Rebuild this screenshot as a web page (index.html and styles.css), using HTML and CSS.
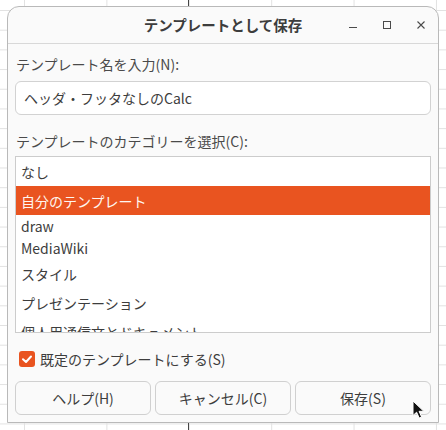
FILE: index.html
```html
<!DOCTYPE html>
<html lang="ja">
<head>
<meta charset="utf-8">
<title>テンプレートとして保存</title>
<link rel="stylesheet" href="styles.css">
</head>
<body>
<div class="dialog">
  <div class="titlebar">
    <div class="tb-spacer"></div>
    <div class="title">テンプレートとして保存</div>
    <div class="controls">
      <div class="ctl"><svg width="10" height="10" viewBox="0 0 10 10"><line x1="1" y1="7.5" x2="9" y2="7.5" stroke="#4a4a4a" stroke-width="1"/></svg></div>
      <div class="ctl"><svg width="10" height="10" viewBox="0 0 10 10"><rect x="1.5" y="1.5" width="7" height="7" fill="none" stroke="#4a4a4a" stroke-width="1"/></svg></div>
      <div class="ctl"><svg width="10" height="10" viewBox="0 0 10 10"><path d="M1.5 1.5 L8.5 8.5 M8.5 1.5 L1.5 8.5" stroke="#4a4a4a" stroke-width="1.1"/></svg></div>
    </div>
  </div>
  <div class="content">
    <div class="label">テンプレート名を入力(N):</div>
    <div class="entry">ヘッダ・フッタなしのCalc</div>
    <div class="label label2">テンプレートのカテゴリーを選択(C):</div>
    <div class="list">
      <div class="row">なし</div>
      <div class="row selected">自分のテンプレート</div>
      <div class="row short">draw</div>
      <div class="row short">MediaWiki</div>
      <div class="row">スタイル</div>
      <div class="row">プレゼンテーション</div>
      <div class="row">個人用通信文とドキュメント</div>
    </div>
    <div class="check-row">
      <div class="checkbox"><svg width="16" height="16" viewBox="0 0 16 16"><path d="M4 8.2 L7 11 L12 5.5" fill="none" stroke="#ffffff" stroke-width="2" stroke-linecap="round" stroke-linejoin="round"/></svg></div>
      <div class="check-label">既定のテンプレートにする(S)</div>
    </div>
    <div class="buttons">
      <div class="btn">ヘルプ(H)</div>
      <div class="btn">キャンセル(C)</div>
      <div class="btn">保存(S)</div>
    </div>
  </div>
</div>
<svg class="cursor" width="14" height="20" viewBox="0 0 14 20"><path d="M1 1 L1 15.5 L4.6 12.2 L7.2 18 L9.6 17 L7.1 11.3 L11.8 11.3 Z" fill="#111" stroke="#fff" stroke-width="1" stroke-linejoin="round"/></svg>
</body>
</html>
```
FILE: styles.css
```css
html, body {
  margin: 0;
  padding: 0;
  width: 446px;
  height: 430px;
  overflow: hidden;
}
body {
  font-family: "Noto Sans CJK JP", "Noto Sans", sans-serif;
  color: #3d3d3d;
  background-color: #ffffff;
  background-image:
    linear-gradient(#444, #444),
    linear-gradient(to right, #e2e2e2 1px, transparent 1px),
    linear-gradient(to bottom, #e2e2e2 1px, transparent 1px);
  background-repeat: no-repeat, repeat, repeat;
  background-size: 1px 430px, 82.4px 19.7px, 82.4px 19.7px;
  background-position: 188px 0, 24px 10px, 24px 10px;
  position: relative;
}
.dialog {
  margin: 6px 0 0 7px;
  width: 432px;
  box-sizing: border-box;
  background: #fafafa;
  border: 1px solid #b9b9b9;
  border-radius: 12px 12px 0 0;
}
.titlebar {
  height: 36px;
  border-bottom: 1px solid #d8d8d8;
  display: grid;
  grid-template-columns: 1fr auto 1fr;
  align-items: center;
}
.title {
  font-size: 14.5px;
  font-weight: bold;
  color: #3d3d3d;
  line-height: 20px;
}
.controls {
  display: flex;
  justify-content: flex-end;
}
.ctl {
  width: 34px;
  height: 36px;
  display: flex;
  align-items: center;
  justify-content: center;
}
.ctl svg { display: block; }
.content {
  padding: 10px 7px 7px;
  font-size: 14px;
}
.label {
  padding-left: 1px;
  line-height: 21px;
  height: 21px;
  color: #4a4a4a;
}
.label2 {
  margin-top: 16px;
  height: 20px;
  line-height: 20px;
}
.entry {
  margin-top: 6px;
  height: 34px;
  box-sizing: border-box;
  border: 1px solid #d2d2d2;
  border-radius: 6px;
  background: #ffffff;
  padding: 0 8px;
  line-height: 32px;
  color: #3d3d3d;
}
.list {
  margin-top: 5px;
  height: 177px;
  box-sizing: border-box;
  border: 1px solid #cccccc;
  background: #ffffff;
  overflow: hidden;
}
.row {
  height: 29px;
  padding-left: 5px;
  display: flex;
  align-items: center;
  flex-shrink: 0;
  white-space: nowrap;
  color: #3d3d3d;
}
.row.short {
  height: 22px;
}
.row.selected {
  background: #e95420;
  color: #fff6f0;
}
.check-row {
  margin-top: 16px;
  height: 20px;
  display: flex;
  align-items: center;
  padding-left: 4px;
  gap: 5px;
}
.checkbox {
  width: 16px;
  height: 16px;
  border-radius: 3px;
  background: #e95420;
}
.checkbox svg { display: block; }
.check-label {
  line-height: 20px;
  color: #3d3d3d;
}
.buttons {
  margin-top: 12px;
  display: grid;
  grid-template-columns: 1fr 1fr 1fr;
  gap: 4px;
}
.btn {
  height: 34px;
  box-sizing: border-box;
  border: 1px solid #d0d0d0;
  border-radius: 6px;
  background: #fafafa;
  display: flex;
  align-items: center;
  justify-content: center;
  color: #3d3d3d;
}
.cursor {
  position: absolute;
  left: 412px;
  top: 400px;
}
```
